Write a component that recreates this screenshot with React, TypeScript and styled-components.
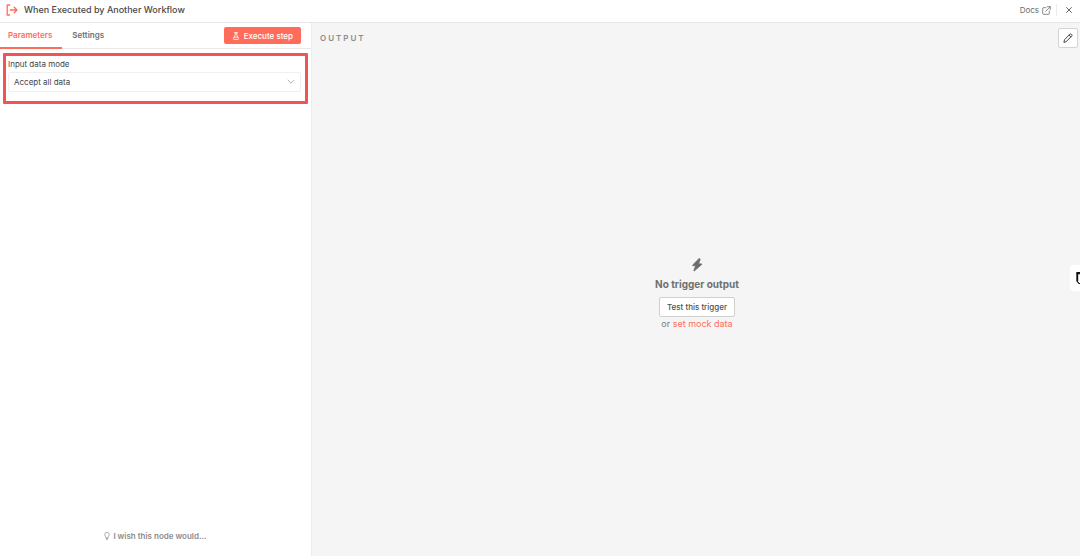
import React from 'react';
import styled, { createGlobalStyle } from 'styled-components';

const accent = '#ff6d5a';

const GlobalStyle = createGlobalStyle`
  *, *::before, *::after { box-sizing: border-box; }
  body {
    margin: 0;
    background: #fff;
    color: #555;
    font-family: Inter, "Liberation Sans", sans-serif;
    font-size: 8px;
    line-height: 12px;
  }
  button, select { font: inherit; color: inherit; }
  svg { display: block; flex: none; }
`;

const Page = styled.div`
  display: flex;
  flex-direction: column;
  min-height: 100vh;
`;

const Header = styled.header`
  display: flex;
  align-items: center;
  height: 23px;
  padding: 0 7px 2px 6px;
  border-bottom: 1px solid #e6e6e6;
`;

const Title = styled.h1`
  flex: 1;
  margin: 0 0 0 6px;
  font-size: 9px;
  line-height: 14px;
  font-weight: 500;
  color: #484848;
`;

const DocsLink = styled.a`
  display: flex;
  align-items: center;
  gap: 3px;
  padding-right: 5px;
  border-right: 1px solid #ececec;
  color: #6b6b6b;
  text-decoration: none;
`;

const CloseButton = styled.button`
  display: flex;
  margin-left: 8px;
  padding: 0;
  border: 0;
  background: none;
  color: #555;
`;

const Main = styled.main`
  display: flex;
  flex: 1;
`;

const Settings = styled.section`
  display: flex;
  flex-direction: column;
  flex: 0 0 312px;
  border-right: 1px solid #ededed;
`;

const TabBar = styled.nav`
  display: flex;
  align-items: stretch;
  gap: 2px;
  height: 26px;
  padding-right: 10px;
  border-bottom: 1px solid #e8e8e8;
`;

const Tab = styled.button<{ $active?: boolean }>`
  margin-bottom: -1px;
  padding: 0 10px 0 8px;
  border: 0;
  border-bottom: 2px solid ${(p) => (p.$active ? accent : 'transparent')};
  background: none;
  color: ${(p) => (p.$active ? accent : '#707070')};
  font-weight: 600;
`;

const ExecuteButton = styled.button`
  display: flex;
  align-items: center;
  align-self: center;
  gap: 4px;
  height: 17px;
  margin-left: auto;
  padding: 0 8px;
  border: 0;
  border-radius: 2px;
  background: ${accent};
  color: #fff;
  font-weight: 500;
`;

const Highlight = styled.div`
  display: flex;
  flex-direction: column;
  gap: 2px;
  height: 51px;
  margin: 4px 3px 0;
  padding: 2px 4px 0 2px;
  border: 3px solid #f05454;
  border-radius: 1px;
`;

const FieldLabel = styled.label`
  color: #444;
`;

const SelectBox = styled.div`
  display: grid;
  align-items: center;
  > * { grid-area: 1 / 1; }
  > svg {
    justify-self: end;
    margin-right: 6px;
    pointer-events: none;
  }
`;

const Select = styled.select`
  appearance: none;
  width: 100%;
  height: 20px;
  padding: 0 20px 0 5px;
  border: 1px solid #f0f0f0;
  border-radius: 2px;
  background: #fff;
  color: #444;
`;

const WishLink = styled.a`
  display: flex;
  align-items: center;
  justify-content: center;
  gap: 3px;
  margin-top: auto;
  padding-bottom: 14px;
  color: #8c8c8c;
  font-weight: 600;
  text-decoration: none;
`;

const Output = styled.section`
  display: flex;
  flex-direction: column;
  flex: 1;
  background: #f5f5f5;
`;

const OutputBar = styled.div`
  display: flex;
  align-items: center;
  justify-content: space-between;
  padding: 5px 2px 0 8px;
`;

const OutputTitle = styled.h2`
  margin: 0;
  color: #8c8c8c;
  font-size: 8px;
  line-height: 12px;
  font-weight: 600;
  letter-spacing: 2px;
`;

const EditButton = styled.button`
  display: flex;
  align-items: center;
  justify-content: center;
  width: 20px;
  height: 20px;
  padding: 0;
  border: 1px solid #d4d4d4;
  border-radius: 2px;
  background: #fff;
  color: #444;
`;

const Empty = styled.div`
  display: flex;
  flex: 1;
  flex-direction: column;
  align-items: center;
  justify-content: center;
  padding: 0 0 17px 2px;
  color: #707070;
`;

const EmptyTitle = styled.h3`
  margin: 5px 0 6px;
  font-size: 10px;
  line-height: 14px;
  font-weight: 700;
`;

const TestButton = styled.button`
  height: 20px;
  padding: 0 7px;
  border: 1px solid #d0d0d0;
  border-radius: 2px;
  background: #fff;
  color: #505050;
  font-weight: 500;
`;

const MockLine = styled.p`
  margin: 1px 0 0;
  font-size: 9px;
  color: #7a7a7a;
  a { color: ${accent}; text-decoration: none; }
`;

const SideWidget = styled.button`
  position: fixed;
  top: 265px;
  right: 0;
  display: flex;
  align-items: center;
  justify-content: flex-end;
  width: 10px;
  height: 26px;
  padding: 0;
  border: 0;
  border-radius: 3px 0 0 3px;
  background: #fff;
`;

const stroke = {
  fill: 'none',
  stroke: 'currentColor',
  strokeLinecap: 'round' as const,
  strokeLinejoin: 'round' as const,
};

export default function App() {
  return (
    <Page>
      <GlobalStyle />
      <Header>
        <svg width="12" height="12" viewBox="0 0 12 12" {...stroke} stroke={accent} strokeWidth="1.3">
          <path d="M3.6 1H1.2v10h2.4M4.4 6h6.6M8.2 3.2 11 6 8.2 8.8" />
        </svg>
        <Title>When Executed by Another Workflow</Title>
        <DocsLink href="#docs">
          Docs
          <svg width="9" height="9" viewBox="0 0 9 9" {...stroke} strokeWidth="0.8">
            <path d="M4 1.7H1.4a.7.7 0 0 0-.7.7v5.2c0 .4.3.7.7.7h5.2c.4 0 .7-.3.7-.7V5M5.4.7h2.9v2.9M8.2.8 3.7 5.3" />
          </svg>
        </DocsLink>
        <CloseButton aria-label="Close">
          <svg width="8" height="8" viewBox="0 0 8 8" {...stroke} strokeWidth="0.9">
            <path d="m1.5 1.5 5 5m0-5-5 5" />
          </svg>
        </CloseButton>
      </Header>
      <Main>
        <Settings>
          <TabBar>
            <Tab $active>Parameters</Tab>
            <Tab>Settings</Tab>
            <ExecuteButton>
              <svg width="8" height="8" viewBox="0 0 8 8" {...stroke} strokeWidth="0.8">
                <path d="M2.7.6h2.6M3.2.8v2.4L1.4 6.6c-.2.4 0 .8.5.8h4.2c.5 0 .7-.4.5-.8L4.8 3.2V.8M2.2 5.2h3.6" />
              </svg>
              Execute step
            </ExecuteButton>
          </TabBar>
          <Highlight>
            <FieldLabel htmlFor="mode">Input data mode</FieldLabel>
            <SelectBox>
              <Select id="mode">
                <option>Accept all data</option>
              </Select>
              <svg width="8" height="6" viewBox="0 0 8 6" {...stroke} stroke="#999" strokeWidth="0.8">
                <path d="m1 1.2 3 3 3-3" />
              </svg>
            </SelectBox>
          </Highlight>
          <WishLink href="#feedback">
            <svg width="6" height="8" viewBox="0 0 6 8" {...stroke} strokeWidth="0.7">
              <path d="M2 5.4C2 4.5.7 4.1.7 2.7A2.3 2.3 0 0 1 5.3 2.7C5.3 4.1 4 4.5 4 5.4ZM2.2 6.4h1.6M2.5 7.4h1" />
            </svg>
            I wish this node would...
          </WishLink>
        </Settings>
        <Output>
          <OutputBar>
            <OutputTitle>OUTPUT</OutputTitle>
            <EditButton aria-label="Edit output">
              <svg width="10" height="10" viewBox="0 0 10 10" {...stroke} strokeWidth="1">
                <path d="M1 9l.5-2.3L7 1.2a.9.9 0 0 1 1.3 0l.5.5a.9.9 0 0 1 0 1.3L3.3 8.5ZM6.1 2.1l1.8 1.8" />
              </svg>
            </EditButton>
          </OutputBar>
          <Empty>
            <svg width="12" height="14" viewBox="0 0 12 14" fill="#6b6b6b" stroke="#6b6b6b" strokeWidth="0.6">
              <path d="M7.8.8 1.7 6.9c-.4.4-.2.9.4.9h2.5L2.8 12.3c-.2.6.4.9.8.5L10.500 6.800c.5-.4.2-1-.3-1H7.700L9.200 1.500c.2-.7-.8-1.200-1.400-.7Z" />
            </svg>
            <EmptyTitle>No trigger output</EmptyTitle>
            <TestButton>Test this trigger</TestButton>
            <MockLine>
              or <a href="#mock">set mock data</a>
            </MockLine>
          </Empty>
        </Output>
      </Main>
      <SideWidget aria-label="Open side panel">
        <svg width="4" height="14" viewBox="0 0 4 14" fill="none" stroke="#111">
          <path d="M4 1.5H1V10L3 12.5H4" strokeWidth="1.2" />
          <path d="M.5 2.5H4M1.5 3v7" strokeWidth="1.4" />
        </svg>
      </SideWidget>
    </Page>
  );
}
